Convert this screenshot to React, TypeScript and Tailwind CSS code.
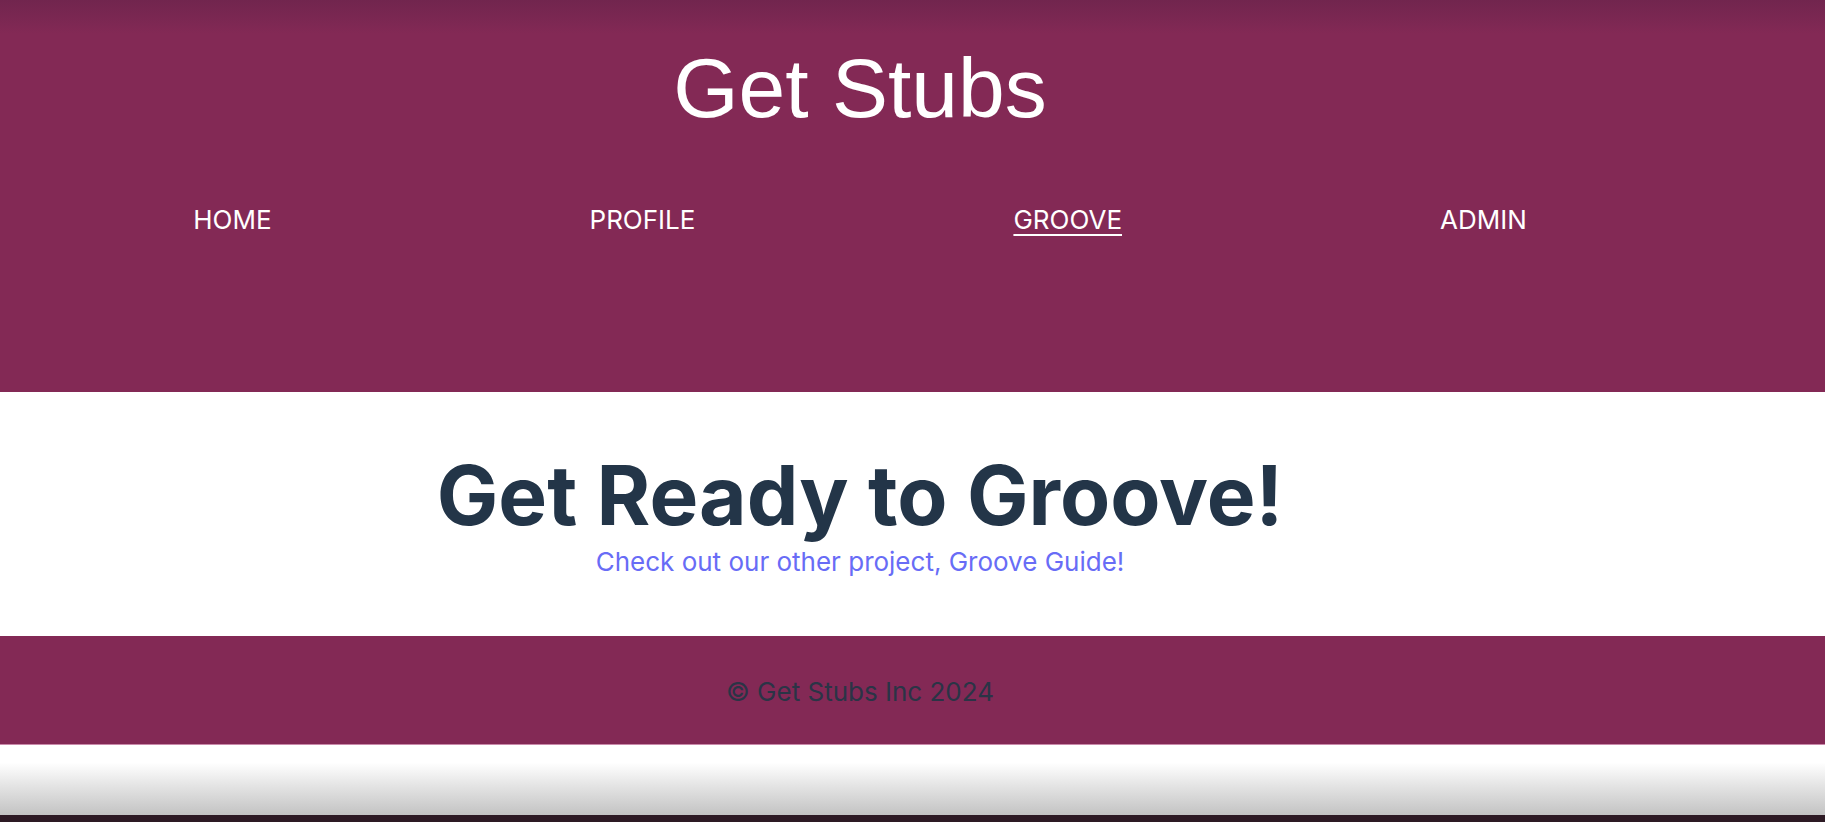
import { useState } from "react";

const links = ["HOME", "PROFILE", "GROOVE", "ADMIN"];

function Header({ active }: { active: string }) {
  return (
    <header className="relative h-[392px] bg-[#832955]">
      <div className="absolute inset-x-0 top-0 h-[34px] bg-gradient-to-b from-[#71254e] to-[#832955]" />
      <div className="relative w-[1720px] pt-[40px]">
        <h1 className="text-center font-['Liberation_Sans',Arial,sans-serif] text-[84px] leading-[96px] text-white">
          Get Stubs
        </h1>
        <nav className="mt-[69px] flex justify-center gap-[318px] font-['Inter',sans-serif] text-[26px] leading-[29px] text-white">
          {links.map((link) => (
            <a
              key={link}
              href="#"
              className={link === active ? "underline underline-offset-[5px] decoration-2" : ""}
            >
              {link}
            </a>
          ))}
        </nav>
      </div>
    </header>
  );
}

function Footer() {
  return (
    <footer className="h-[108px] bg-[#832955] pt-[41px]">
      <p className="w-[1720px] text-center font-['Inter',sans-serif] text-[26px] leading-[29px] text-[#2a3446]">
        © Get Stubs Inc 2024
      </p>
    </footer>
  );
}

export default function App() {
  const [active] = useState("GROOVE");

  return (
    <div className="flex h-[822px] flex-col overflow-hidden bg-white">
      <Header active={active} />
      <main className="h-[244px] pt-[63px]">
        <div className="flex w-[1720px] flex-col items-center font-['Inter',sans-serif]">
          <h2 className="text-[82px] font-bold leading-none text-[#233548]">
            Get Ready to Groove!
          </h2>
          <a href="#" className="mt-[10px] text-[26px] leading-[29px] text-[#686cf6]">
            Check out our other project, Groove Guide!
          </a>
        </div>
      </main>
      <Footer />
      <div className="h-px bg-[#c98aaa]" />
      <div className="h-[70px] bg-gradient-to-b from-white from-25% to-[#c3c3c3]" />
      <div className="flex-1 bg-[#2d1a24]" />
    </div>
  );
}
